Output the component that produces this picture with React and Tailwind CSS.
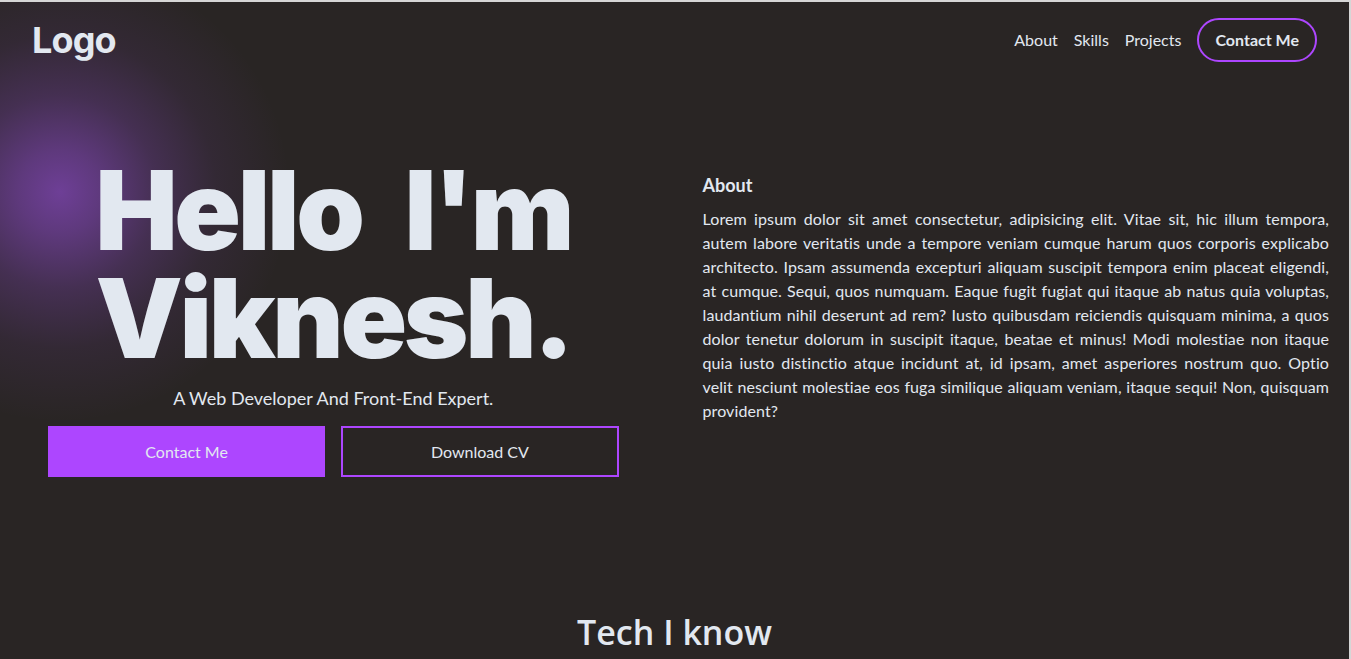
import React from "react";

const links = ["About", "Skills", "Projects"];

const App = () => {
  return (
    <div className="relative min-h-screen overflow-hidden border-t-2 border-r-2 border-[#d6d6d6] bg-[#292524] font-['Lato',sans-serif] text-slate-200">
      {/* purple glow behind the heading */}
      <div className="pointer-events-none absolute left-[-170px] top-[-40px] h-[460px] w-[460px] bg-[radial-gradient(circle_closest-side,rgba(168,85,247,0.54)_0%,rgba(168,85,247,0.42)_18%,rgba(168,85,247,0.22)_42%,rgba(168,85,247,0.08)_68%,rgba(168,85,247,0)_100%)]" />

      <nav className="relative flex h-[76px] items-center justify-between px-8">
        <h1 className="font-['Inter',sans-serif] text-[36px] font-bold tracking-tight">Logo</h1>
        <div className="flex items-center gap-4">
          {links.map((link) => (
            <a key={link} href={`#${link.toLowerCase()}`} className="text-base">
              {link}
            </a>
          ))}
          <button className="rounded-full border-2 border-purple-500 px-4 py-2 text-base font-bold">
            Contact Me
          </button>
        </div>
      </nav>

      <section className="relative grid grid-cols-2 gap-14 px-5 pt-[78px]">
        <div className="flex flex-col items-center px-7">
          <h2 className="text-center font-['Inter',sans-serif] text-[110px] font-black leading-[108px] tracking-[-0.03em] [word-spacing:0.22em]">
            Hello I'm
            <br />
            Viknesh.
          </h2>
          <p className="mt-3 text-lg">A Web Developer And Front-End Expert.</p>
          <div className="mt-3.5 grid w-full grid-cols-2 gap-4">
            <button className="h-[51px] bg-purple-500 text-base">Contact Me</button>
            <button className="h-[51px] border-2 border-purple-500 text-base">
              Download CV
            </button>
          </div>
        </div>
        <div className="pt-[15px]">
          <h3 className="text-lg font-bold">About</h3>
          <p className="mt-2 text-justify text-base leading-6 tracking-[0.1px]">
            Lorem ipsum dolor sit amet consectetur, adipisicing elit. Vitae sit,
            hic illum tempora, autem labore veritatis unde a tempore veniam cumque
            harum quos corporis explicabo architecto. Ipsam assumenda excepturi
            aliquam suscipit tempora enim placeat eligendi, at cumque. Sequi, quos
            numquam. Eaque fugit fugiat qui itaque ab natus quia voluptas,
            laudantium nihil deserunt ad rem? Iusto quibusdam reiciendis quisquam
            minima, a quos dolor tenetur dolorum in suscipit itaque, beatae et
            minus! Modi molestiae non itaque quia iusto distinctio atque incidunt
            at, id ipsam, amet asperiores nostrum quo. Optio velit nesciunt
            molestiae eos fuga similique aliquam veniam, itaque sequi! Non,
            quisquam provident?
          </p>
        </div>
      </section>

      <section className="relative mt-[130px]">
        <h2 className="text-center font-['Open_Sans',sans-serif] text-[34px] font-semibold">
          Tech I know
        </h2>
      </section>
    </div>
  );
};

export default App;
